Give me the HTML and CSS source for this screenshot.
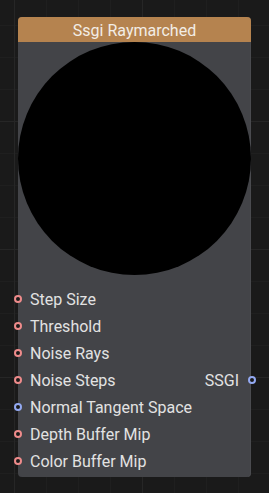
FILE: index.html
```html
<!DOCTYPE html>
<html>
<head>
<meta charset="utf-8">
<link rel="stylesheet" href="styles.css">
</head>
<body>
<div class="canvas">
  <div class="node">
    <div class="node-header">Ssgi Raymarched</div>
    <div class="preview"><div class="sphere"></div></div>
    <div class="ports">
      <div class="row"><span class="port in red"></span><span class="label">Step Size</span></div>
      <div class="row"><span class="port in red"></span><span class="label">Threshold</span></div>
      <div class="row"><span class="port in red"></span><span class="label">Noise Rays</span></div>
      <div class="row"><span class="port in red"></span><span class="label">Noise Steps</span><span class="label out-label">SSGI</span><span class="port out blue"></span></div>
      <div class="row"><span class="port in blue"></span><span class="label">Normal Tangent Space</span></div>
      <div class="row"><span class="port in red"></span><span class="label">Depth Buffer Mip</span></div>
      <div class="row"><span class="port in red"></span><span class="label">Color Buffer Mip</span></div>
    </div>
  </div>
</div>
</body>
</html>
```
FILE: styles.css
```css
html, body {
  margin: 0;
  padding: 0;
}
body {
  width: 269px;
  height: 493px;
  overflow: hidden;
  background-color: #1a1a1a;
  background-image:
    linear-gradient(to right, #262626 1px, transparent 1px),
    linear-gradient(to bottom, #262626 1px, transparent 1px),
    linear-gradient(to right, #1f1f1f 1px, transparent 1px),
    linear-gradient(to bottom, #1f1f1f 1px, transparent 1px);
  background-size: 128px 128px, 128px 128px, 32px 32px, 32px 32px;
  background-position: 14px 0, 0 121px, 14px 0, 0 25px;
  font-family: Roboto, "Noto Sans", sans-serif;
}
.canvas {
  padding: 17px 0 0 18px;
}
.node {
  width: 233px;
  background: #434448;
  border-radius: 4px;
  box-shadow: inset -1px 0 0 #4a4b4f;
}
.node-header {
  height: 25px;
  line-height: 28px;
  background: #b5834f;
  border-radius: 4px 4px 0 0;
  color: #f2ede6;
  font-size: 16px;
  text-align: center;
}
.preview {
  width: 233px;
  height: 233px;
}
.sphere {
  width: 100%;
  height: 100%;
  border-radius: 50%;
  background: #000;
}
.ports {
  padding: 11px 0 2px;
}
.row {
  position: relative;
  height: 27px;
  display: flex;
  align-items: center;
  padding: 0 12px 0 12px;
  color: #e2e2e2;
  font-size: 16px;
}
.label {
  white-space: nowrap;
}
.out-label {
  margin-left: auto;
}
.port {
  position: absolute;
  top: 50%;
  width: 4px;
  height: 4px;
  margin-top: -5px;
  border: 2px solid;
  border-radius: 50%;
  background: #1a1a1a;
}
.port.in {
  left: -4px;
}
.port.out {
  right: -5px;
}
.red {
  border-color: #ee8b8b;
}
.blue {
  border-color: #93a9f2;
}
```
